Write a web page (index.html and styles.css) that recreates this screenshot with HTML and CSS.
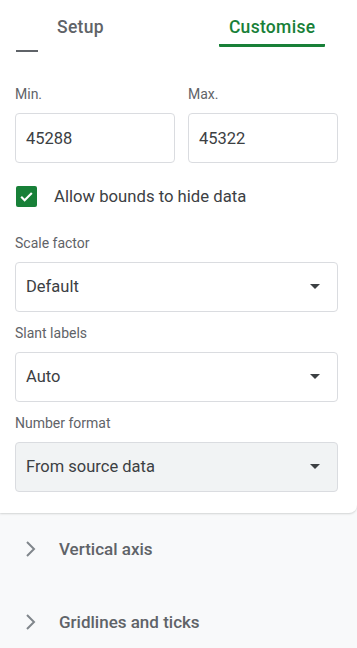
FILE: index.html
```html
<!DOCTYPE html>
<html lang="en">

<head>
    <meta charset="UTF-8" />
    <meta name="viewport" content="width=device-width, initial-scale=1.0" />
    <title>Chart editor - Customise</title>
    <link rel="stylesheet" href="styles.css">
</head>

<body>
    <div class="panel">
        <div class="tabs">
            <div class="tab">Setup</div>
            <div class="tab active">Customise</div>
        </div>

        <div class="scroll-mark"></div>

        <div class="row">
            <div class="field field-min">
                <div class="label">Min.</div>
                <div class="input">45288</div>
            </div>
            <div class="field field-max">
                <div class="label">Max.</div>
                <div class="input">45322</div>
            </div>
        </div>

        <div class="check-row">
            <span class="checkbox">
                <svg width="15" height="15" viewBox="0 0 24 24">
                    <path d="M3.5 12.5l5.5 5.5 11.5-11.5" fill="none" stroke="#fff" stroke-width="3.4" />
                </svg>
            </span>
            <span class="check-text">Allow bounds to hide data</span>
        </div>

        <div class="label">Scale factor</div>
        <div class="select">
            <span>Default</span>
            <span class="arrow"></span>
        </div>

        <div class="label">Slant labels</div>
        <div class="select">
            <span>Auto</span>
            <span class="arrow"></span>
        </div>

        <div class="label">Number format</div>
        <div class="select filled">
            <span>From source data</span>
            <span class="arrow"></span>
        </div>
    </div>

    <!-- collapsed sections -->
    <div class="section">
        <svg class="chevron" width="12" height="18" viewBox="0 0 12 18">
            <path d="M2 2l7 7-7 7" fill="none" stroke="#80868b" stroke-width="2" />
        </svg>
        <span>Vertical axis</span>
    </div>
    <div class="section">
        <svg class="chevron" width="12" height="18" viewBox="0 0 12 18">
            <path d="M2 2l7 7-7 7" fill="none" stroke="#80868b" stroke-width="2" />
        </svg>
        <span>Gridlines and ticks</span>
    </div>
</body>

</html>
```

FILE: styles.css
```css
* {
    box-sizing: border-box;
    margin: 0;
    padding: 0;
}

body {
    font-family: Roboto, 'Noto Sans', Arial, sans-serif;
    background: #f8f9fa;
    color: #3c4043;
    overflow: hidden;
}

.panel {
    background: #fff;
    border-radius: 0 0 8px 0;
    box-shadow: 0 1px 2px rgba(60, 64, 67, 0.2);
    padding: 0 19px 21px 15px;
}

.tabs {
    display: flex;
    height: 47px;
    margin: 0 -19px 0 -15px;
    padding-left: 47px;
    gap: 105px;
}

.tab {
    padding: 16px 10px 0;
    font-size: 17.5px;
    line-height: 22px;
    font-weight: 500;
    color: #5f6368;
    letter-spacing: 0.3px;
}

.tab.active {
    color: #188038;
    border-bottom: 3px solid #188038;
    border-radius: 0 0 1px 1px;
}

.scroll-mark {
    width: 22px;
    height: 2px;
    margin: 3px 0 0 1px;
    background: #5f6368;
}

.row {
    display: flex;
    gap: 13px;
    margin-top: 34px;
}

.field-min {
    width: 160px;
}

.field-max {
    flex: 1;
}

.label {
    font-size: 14px;
    line-height: 16px;
    color: #5f6368;
    margin-bottom: 11px;
}

.input,
.select {
    height: 50px;
    border: 1px solid #dadce0;
    border-radius: 4px;
    padding: 0 10px;
    display: flex;
    align-items: center;
    font-size: 16.5px;
    color: #3c4043;
}

.check-row {
    display: flex;
    align-items: center;
    height: 21px;
    margin: 23px 0 27.5px 1px;
}

.checkbox {
    width: 21px;
    height: 21px;
    border-radius: 2px;
    background: #188038;
    display: flex;
    align-items: center;
    justify-content: center;
}

.check-text {
    font-size: 16.7px;
    margin-left: 17px;
}

.select {
    justify-content: space-between;
    padding-right: 17px;
    margin-bottom: 13px;
}

.select:last-child {
    margin-bottom: 0;
}

.select.filled {
    background: #f1f3f4;
}

.arrow {
    width: 0;
    height: 0;
    border-left: 5px solid transparent;
    border-right: 5px solid transparent;
    border-top: 5px solid #3c4043;
}

.section {
    display: flex;
    align-items: center;
    height: 73px;
    padding-left: 25px;
    font-size: 17px;
    font-weight: 500;
    color: #5f6368;
}

.section:first-of-type {
    margin-top: 1px;
}

.chevron {
    margin-right: 22px;
}
```
